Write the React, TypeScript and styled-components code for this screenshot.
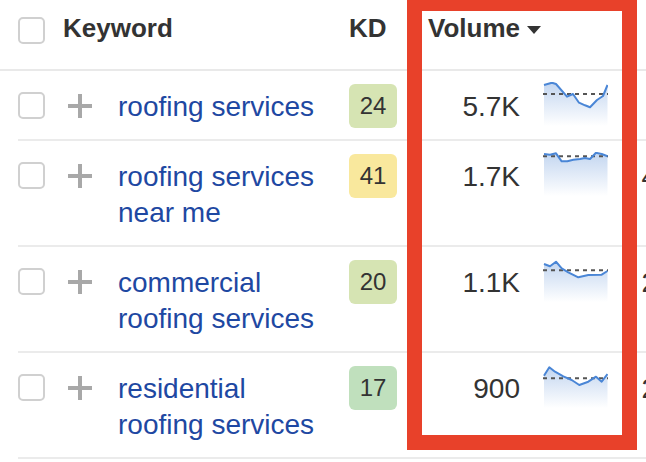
import React from "react";
import styled, { createGlobalStyle } from "styled-components";

const Global = createGlobalStyle`
  html, body { margin: 0; padding: 0; background: #ffffff; overflow: hidden; }
  body { font-family: "Liberation Sans", Arial, Helvetica, sans-serif; color: #333333; }
`;

const COLS = "45px 55px 231px 71px 100px 23px 65px 91px";

const Table = styled.div`
  position: relative;
  width: 646px;
  height: 462px;
  overflow: hidden;
`;

const HeaderRow = styled.div`
  display: grid;
  grid-template-columns: ${COLS};
  align-items: start;
  height: 69px;
  box-sizing: content-box;
  padding-left: 18px;
  border-bottom: 2px solid #e9e9e9;
`;

const HeaderCell = styled.div<{ $span?: string; $align?: string; $pad?: number }>`
  grid-column: ${(p) => p.$span ?? "auto"};
  margin-top: 13px;
  padding-left: ${(p) => p.$pad ?? 0}px;
  font-size: 26px;
  line-height: 30px;
  font-weight: 700;
  color: #333333;
  text-align: ${(p) => p.$align ?? "left"};
  white-space: nowrap;
`;

const SortArrow = styled.span`
  display: inline-block;
  width: 0;
  height: 0;
  margin-left: 7px;
  border-left: 7.5px solid transparent;
  border-right: 7.5px solid transparent;
  border-top: 8px solid #333333;
  vertical-align: middle;
`;

const Row = styled.div`
  display: grid;
  grid-template-columns: ${COLS};
  align-items: start;
  margin-left: 18px;
  padding: 18px 0 14px;
  border-bottom: 2px solid #ebebeb;
`;

const Checkbox = styled.span<{ $top: number }>`
  display: block;
  box-sizing: border-box;
  width: 27px;
  height: 27px;
  margin-top: ${(p) => p.$top}px;
  border: 2px solid #d0d0d0;
  border-radius: 5px;
  background: #ffffff;
`;

const PlusCell = styled.div`
  padding-left: 5px;
  margin-top: 5px;
  height: 24px;
  line-height: 0;
`;

const Keyword = styled.a`
  display: block;
  font-size: 28px;
  line-height: 36px;
  color: #1e48a2;
  text-decoration: none;
`;

const KdBadge = styled.span<{ $bg: string }>`
  display: block;
  width: 48px;
  height: 44px;
  margin: -5px 0 -3px;
  border-radius: 6px;
  background: ${(p) => p.$bg};
  font-size: 24px;
  line-height: 44px;
  text-align: center;
  color: #333333;
`;

const Num = styled.div`
  font-size: 28px;
  line-height: 36px;
  text-align: right;
  color: #333333;
  white-space: nowrap;
`;

const SparkBox = styled.div`
  margin: -7px 0 -1px;
  width: 65px;
  height: 44px;
  line-height: 0;
`;

const Highlight = styled.div`
  position: absolute;
  left: 407px;
  top: -4px;
  width: 230px;
  height: 454px;
  box-sizing: border-box;
  border: 15px solid #e8412a;
  pointer-events: none;
`;

const Plus = () => (
  <svg width="24" height="24" viewBox="0 0 24 24">
    <path d="M12 0 V24 M0 12 H24" stroke="#a8a8a8" strokeWidth="4" fill="none" />
  </svg>
);

type Pt = [number, number];

const Sparkline = ({ id, pts, avg }: { id: string; pts: Pt[]; avg: number }) => {
  const line = pts.map((p, i) => `${i ? "L" : "M"}${p[0]} ${p[1]}`).join(" ");
  const area = `${line} L${pts[pts.length - 1][0]} 44 L${pts[0][0]} 44 Z`;
  return (
    <svg width="65" height="44" viewBox="0 0 65 44">
      <defs>
        <linearGradient id={id} x1="0" y1="0" x2="0" y2="1">
          <stop offset="0" stopColor="#c3d6f0" />
          <stop offset="1" stopColor="#ffffff" />
        </linearGradient>
      </defs>
      <path d={area} fill={`url(#${id})`} />
      <path d={`M0 ${avg} H65`} stroke="#555555" strokeWidth="2" strokeDasharray="4 4" />
      <path d={line} stroke="#4a86d6" strokeWidth="2" fill="none" strokeLinejoin="round" />
    </svg>
  );
};

type Item = {
  kw: string[];
  kd: number;
  kdBg: string;
  vol: string;
  pts: Pt[];
  avg: number;
  tp: string;
};

const items: Item[] = [
  {
    kw: ["roofing services"],
    kd: 24,
    kdBg: "#d6e4b3",
    vol: "5.7K",
    pts: [[1, 3], [9, 0.7], [13, 2], [24, 14.7], [30, 12], [36, 20.7], [42, 23.3], [47, 25.3], [54, 18], [60, 14], [64.5, 3]],
    avg: 12,
    tp: "320",
  },
  {
    kw: ["roofing services", "near me"],
    kd: 41,
    kdBg: "#f9e89d",
    vol: "1.7K",
    pts: [[1, 2], [7, 2.7], [13, 1.3], [18.7, 9.3], [24.3, 9.3], [30.3, 7.7], [37, 7], [42, 6], [47, 7], [53, 0.8], [58.7, 2], [64.5, 4.3]],
    avg: 4.3,
    tp: "4.1K",
  },
  {
    kw: ["commercial", "roofing services"],
    kd: 20,
    kdBg: "#d6e4b3",
    vol: "1.1K",
    pts: [[1, 6], [7, 8.3], [13, 3.7], [18.7, 10.3], [25.3, 14.3], [35.3, 19.3], [45.3, 17], [58.7, 16.7], [64.5, 13]],
    avg: 12.3,
    tp: "2.6K",
  },
  {
    kw: ["residential", "roofing services"],
    kd: 17,
    kdBg: "#c0e0bd",
    vol: "900",
    pts: [[1, 11.7], [6.3, 3.3], [12, 7.7], [20.3, 12.3], [28.7, 16], [36.3, 21], [45.3, 17.7], [53, 12.7], [58.7, 17.7], [64.5, 10]],
    avg: 14.3,
    tp: "2.2K",
  },
];

export default function App() {
  return (
    <>
      <Global />
      <Table>
        <HeaderRow>
          <Checkbox $top={17} />
          <HeaderCell $span="2 / 4">Keyword</HeaderCell>
          <HeaderCell>KD</HeaderCell>
          <HeaderCell $span="5 / 8" $pad={8}>
            Volume
            <SortArrow />
          </HeaderCell>
          <HeaderCell $align="right">TP</HeaderCell>
        </HeaderRow>
        {items.map((it, i) => (
          <Row key={i}>
            <Checkbox $top={3} />
            <PlusCell>
              <Plus />
            </PlusCell>
            <Keyword href="#">
              {it.kw.map((l, j) => (
                <React.Fragment key={j}>
                  {j > 0 && <br />}
                  {l}
                </React.Fragment>
              ))}
            </Keyword>
            <KdBadge $bg={it.kdBg}>{it.kd}</KdBadge>
            <Num>{it.vol}</Num>
            <span />
            <SparkBox>
              <Sparkline id={`sg${i}`} pts={it.pts} avg={it.avg} />
            </SparkBox>
            <Num>{it.tp}</Num>
          </Row>
        ))}
        <Highlight />
      </Table>
    </>
  );
}
